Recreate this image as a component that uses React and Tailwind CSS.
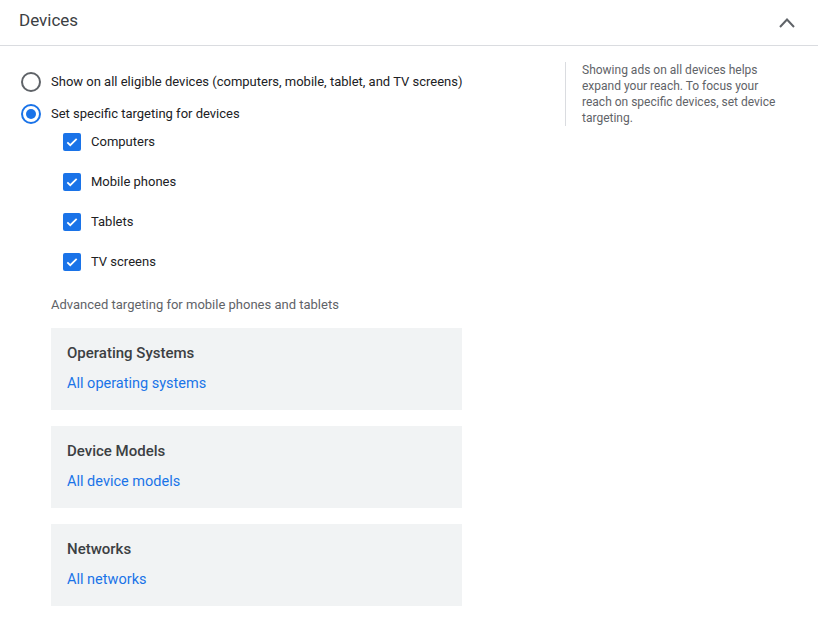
import React from "react";

function Radio({ checked, label }) {
  return (
    <div className="flex items-center h-[24px]">
      {checked ? (
        <div className="w-[20px] h-[20px] rounded-full border-2 border-[#1a73e8] flex items-center justify-center">
          <div className="w-[10px] h-[10px] rounded-full bg-[#1a73e8]" />
        </div>
      ) : (
        <div className="w-[20px] h-[20px] rounded-full border-2 border-[#5f6368]" />
      )}
      <span className="ml-[10px] text-[13px] text-[#202124]">{label}</span>
    </div>
  );
}

function Check({ label }) {
  return (
    <div className="flex items-center h-[24px]">
      <div className="w-[18px] h-[18px] rounded-[2px] bg-[#1a73e8] flex items-center justify-center">
        <svg width="14" height="14" viewBox="0 0 24 24" fill="none">
          <path d="M4 12.5l5 5L20 6.5" stroke="white" strokeWidth="3" />
        </svg>
      </div>
      <span className="ml-[10px] text-[13px] text-[#202124]">{label}</span>
    </div>
  );
}

function Box({ title, link }) {
  return (
    <div className="w-[411px] h-[82px] bg-[#f1f3f4] px-[16px] pt-[15px]">
      <div className="text-[15px] leading-[20px] font-medium text-[#3c4043]">{title}</div>
      <div className="mt-[11px] text-[14.5px] leading-[20px] text-[#1a73e8]">{link}</div>
    </div>
  );
}

export default function App() {
  return (
    <div className="w-[818px] h-[636px] bg-white font-['Roboto',sans-serif]">
      <div className="h-[46px] border-b border-[#dadce0] flex items-center justify-between pl-[19px] pr-[23px] pb-[4px]">
        <span className="text-[17px] text-[#3c4043]">Devices</span>
        <svg width="16" height="11" viewBox="0 0 16 11" fill="none" className="mt-[4px]">
          <path d="M1 10L8 2.5l7 7.5" stroke="#5f6368" strokeWidth="2" />
        </svg>
      </div>
      <div className="flex">
        <div className="w-[544px] pl-[21px] pt-[24px]">
          <div className="flex flex-col gap-[8px]">
            <Radio label="Show on all eligible devices (computers, mobile, tablet, and TV screens)" />
            <Radio checked label="Set specific targeting for devices" />
          </div>
          <div className="mt-[4px] pl-[42px] flex flex-col gap-[16px]">
            <Check label="Computers" />
            <Check label="Mobile phones" />
            <Check label="Tablets" />
            <Check label="TV screens" />
          </div>
          <div className="mt-[21px] pl-[30px] text-[13px] leading-[20px] text-[#5f6368]">
            Advanced targeting for mobile phones and tablets
          </div>
          <div className="mt-[13px] pl-[30px] flex flex-col gap-[16px]">
            <Box title="Operating Systems" link="All operating systems" />
            <Box title="Device Models" link="All device models" />
            <Box title="Networks" link="All networks" />
          </div>
        </div>
        <div className="pt-[16px] pl-[21px]">
          <div className="border-l border-[#dadce0] pl-[16px] w-[215px] text-[12px] leading-[16px] text-[#5f6368]">
            Showing ads on all devices helps expand your reach. To focus your reach on specific devices, set device targeting.
          </div>
        </div>
      </div>
    </div>
  );
}
